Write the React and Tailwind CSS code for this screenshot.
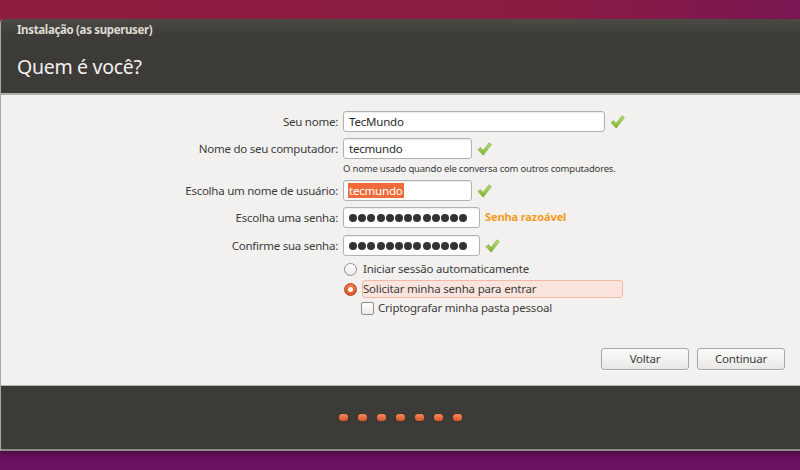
import React from "react";

function Check() {
  return (
    <svg width="15" height="14" viewBox="0 0 15 14" className="shrink-0">
      <defs>
        <linearGradient id="cg" x1="0" y1="0" x2="0" y2="1">
          <stop offset="0" stopColor="#b9e26c" />
          <stop offset="1" stopColor="#7fb22e" />
        </linearGradient>
      </defs>
      <path
        d="M1 7.5 L3.6 5.6 L6 8.6 L12 0.8 L14.4 2.6 L6.2 13.2 Z"
        fill="url(#cg)"
        stroke="#79a83a"
        strokeWidth="0.6"
        strokeLinejoin="round"
      />
    </svg>
  );
}

function Dots() {
  return (
    <div className="flex gap-[1.2px] items-center">
      {Array.from({ length: 13 }).map((_, i) => (
        <div key={i} className="w-[8px] h-[8px] rounded-full bg-[#333333]" />
      ))}
    </div>
  );
}

function Row({ label, children, className = "" }) {
  return (
    <div className={"flex items-center " + className}>
      <div className="w-[342px] pr-[5px] text-right text-[11.5px] tracking-[-0.25px] text-[#3c3c3c] leading-none">{label}</div>
      {children}
    </div>
  );
}

function Input({ w, children }) {
  return (
    <div
      className={
        "h-[21px] bg-white border border-[#b3b1ad] rounded-[3px] flex items-center pl-[5px] text-[11.5px] tracking-[-0.2px] text-[#2c2c2c] shadow-[inset_0_1px_1px_rgba(0,0,0,0.08)] " +
        w
      }
    >
      {children}
    </div>
  );
}

export default function App() {
  const font = { fontFamily: '"Noto Sans", "Open Sans", sans-serif' };
  return (
    <div
      className="w-[800px] h-[470px] overflow-hidden flex flex-col bg-[linear-gradient(90deg,#8e1e3e_0%,#8a1c44_70%,#7a1652_100%)]"
      style={font}
    >
      <div className="h-[19px] shrink-0" />
      <div className="flex-1 flex flex-col border-l border-[#a9a8a4] ml-0 rounded-tl-[4px] overflow-hidden">
        {/* header */}
        <div className="h-[74px] shrink-0 bg-[linear-gradient(180deg,#4b4a45_0px,#3d3c38_16px,#3c3b37_100%)] flex flex-col px-[16px]">
          <div className="text-[11.5px] tracking-[-0.35px] font-bold text-[#dfdbd2] mt-[4px] leading-[14px]">Instalação (as superuser)</div>
          <div className="text-[19.5px] tracking-[-0.3px] text-[#f2f1ef] mt-[18px] leading-[24px]">Quem é você?</div>
        </div>
        <div className="h-[2px] shrink-0 bg-[#aeada9]" />
        {/* content */}
        <div className="h-[290px] shrink-0 bg-[#f2f1f0] flex flex-col pt-[16px]">
          <Row label="Seu nome:">
            <Input w="w-[262px]">TecMundo</Input>
            <div className="ml-[5px]"><Check /></div>
          </Row>
          <Row label="Nome do seu computador:" className="mt-[6px]">
            <Input w="w-[129px]">tecmundo</Input>
            <div className="ml-[5px]"><Check /></div>
          </Row>
          <div className="h-[14px] mt-[3px] pl-[342px] text-[9.5px] tracking-[-0.2px] leading-[14px] text-[#3c3c3c]">
            O nome usado quando ele conversa com outros computadores.
          </div>
          <Row label="Escolha um nome de usuário:" className="mt-[4px]">
            <Input w="w-[129px]">
              <span className="bg-[#ef6c3a] text-white leading-[15px] px-[1px] -ml-[1px]">tecmundo</span>
            </Input>
            <div className="ml-[5px]"><Check /></div>
          </Row>
          <Row label="Escolha uma senha:" className="mt-[6px]">
            <Input w="w-[137px]"><Dots /></Input>
            <div className="ml-[5px] text-[11px] tracking-[-0.1px] font-bold text-[#f39a1d]">Senha razoável</div>
          </Row>
          <Row label="Confirme sua senha:" className="mt-[7px]">
            <Input w="w-[137px]"><Dots /></Input>
            <div className="ml-[5px]"><Check /></div>
          </Row>
          <div className="flex items-center h-[18px] mt-[4px] pl-[343px]">
            <div className="w-[13px] h-[13px] rounded-full border border-[#8f8e8b] bg-[linear-gradient(180deg,#ffffff,#ebeae8)]" />
            <div className="ml-[6px] text-[11.5px] tracking-[-0.2px] text-[#3c3c3c]">Iniciar sessão automaticamente</div>
          </div>
          <div className="flex items-center h-[18px] mt-[2px] pl-[343px]">
            <div className="w-[13px] h-[13px] rounded-full border border-[#b1421b] bg-[linear-gradient(180deg,#f37b4b,#dd5626)] flex items-center justify-center">
              <div className="w-[5px] h-[5px] rounded-full bg-white" />
            </div>
            <div className="ml-[5px] w-[261px] h-[18px] rounded-[3px] bg-[#fae4dd] border border-[#f1b8a4] flex items-center pl-[0px] text-[11.5px] tracking-[-0.2px] text-[#3c3c3c]">
              Solicitar minha senha para entrar
            </div>
          </div>
          <div className="flex items-center h-[18px] mt-[1px] pl-[360px]">
            <div className="w-[13px] h-[13px] rounded-[2px] border border-[#8f8e8b] bg-[linear-gradient(180deg,#ffffff,#ebeae8)]" />
            <div className="ml-[4px] text-[11.5px] tracking-[-0.2px] text-[#3c3c3c]">Criptografar minha pasta pessoal</div>
          </div>
          <div className="flex justify-end gap-[8px] pr-[15px] mt-[31px]">
            <button className="w-[88px] h-[22px] rounded-[3px] border border-[#a9a7a3] bg-[linear-gradient(180deg,#fbfbfa,#e9e8e6)] text-[11.5px] tracking-[-0.2px] text-[#3c3c3c] shadow-[0_1px_0_rgba(255,255,255,0.8)]">
              Voltar
            </button>
            <button className="w-[88px] h-[22px] rounded-[3px] border border-[#a9a7a3] bg-[linear-gradient(180deg,#fbfbfa,#e9e8e6)] text-[11.5px] tracking-[-0.2px] text-[#3c3c3c] shadow-[0_1px_0_rgba(255,255,255,0.8)]">
              Continuar
            </button>
          </div>
        </div>
        <div className="h-[1px] shrink-0 bg-[#b5b4b0]" />
        {/* footer */}
        <div className="flex-1 bg-[#3c3b37] flex items-center justify-center gap-[10px] pl-[0px]">
          {Array.from({ length: 7 }).map((_, i) => (
            <div key={i} className="w-[9px] h-[7px] rounded-[3px] bg-[linear-gradient(180deg,#f48a5c,#d9532b)] shadow-[0_0_1px_rgba(0,0,0,0.6)]" />
          ))}
        </div>
        <div className="h-[2px] shrink-0 bg-[#8d8c88]" />
      </div>
      <div className="h-[19px] shrink-0 bg-[linear-gradient(180deg,#4d0c45_0%,#6a1060_40%,#6c1160_100%)]" />
    </div>
  );
}
